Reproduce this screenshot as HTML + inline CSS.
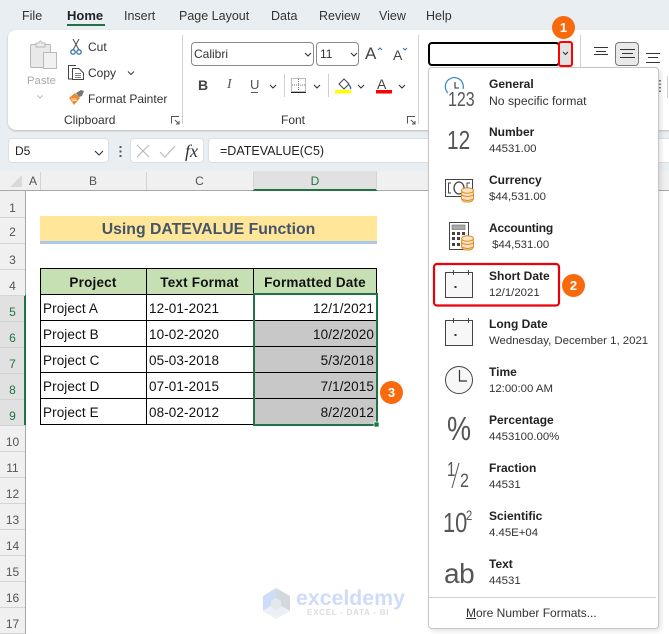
<!DOCTYPE html>
<html><head><meta charset="utf-8">
<style>
html,body{margin:0;padding:0}
body{width:669px;height:634px;overflow:hidden;position:relative;background:#fff;font-family:"Liberation Sans",sans-serif;color:#222}
.b{position:absolute;box-sizing:border-box}
.t{position:absolute;white-space:nowrap;line-height:16px;height:16px}
.tab{font-size:12.5px;top:8px;color:#333}
.rb{font-size:12px;color:#333}
.rn{font-size:12px;left:0;width:25px;text-align:center;color:#555}
.cell{font-size:13.5px;color:#111;letter-spacing:.1px}
.r{text-align:right;left:253px;width:121px}
.h{font-size:13.5px;font-weight:bold;color:#111;text-align:center;letter-spacing:.2px}
.m{font-size:12px;font-weight:bold;left:489px;color:#222}
.s{font-size:11.4px;left:489px;color:#333}
.ic{position:absolute;white-space:nowrap;color:#555;line-height:1;transform-origin:left top}
.badge{position:absolute;width:23px;height:23px;border-radius:50%;background:#f96a0c;color:#fff;font-weight:bold;font-size:13px;line-height:23px;text-align:center}
svg{position:absolute;left:0;top:0}
</style></head><body>
<div class="b" style="left:0;top:0;width:669px;height:171px;background:#e9eef2"></div>
<div class="b" style="left:8px;top:30px;width:670px;height:100px;background:#fff;border-radius:8px;box-shadow:0 1px 2px #bbb"></div>

<span class="t tab" style="left:22px">File</span>
<span class="t tab" style="left:67px;font-weight:bold;color:#222;font-size:13px">Home</span>
<div class="b" style="left:67px;top:24px;width:38px;height:2px;background:#217346"></div>
<span class="t tab" style="left:124px">Insert</span>
<span class="t tab" style="left:179px">Page Layout</span>
<span class="t tab" style="left:271px">Data</span>
<span class="t tab" style="left:319px">Review</span>
<span class="t tab" style="left:379px">View</span>
<span class="t tab" style="left:426px">Help</span>

<span class="t rb" style="left:27px;top:73px;color:#aaa;font-size:11.3px">Paste</span>
<span class="t rb" style="left:88px;top:39px">Cut</span>
<span class="t rb" style="left:88px;top:65px">Copy</span>
<span class="t rb" style="left:88px;top:91px">Format Painter</span>
<span class="t rb" style="left:64px;top:112px">Clipboard</span>
<span class="t rb" style="left:281px;top:112px">Font</span>

<div class="b" style="left:191px;top:42px;width:123px;height:24px;border:1px solid #8a8a8a;border-radius:4px"></div>
<div class="b" style="left:316px;top:42px;width:43px;height:24px;border:1px solid #8a8a8a;border-radius:4px"></div>
<span class="t rb" style="left:194px;top:46px">Calibri</span>
<span class="t rb" style="left:320px;top:46px">11</span>
<span class="t" style="left:365px;top:46px;font-size:17px;color:#444">A</span>
<span class="t" style="left:393px;top:47px;font-size:14px;color:#444">A</span>
<span class="t" style="left:198px;top:77px;font-size:14px;font-weight:bold;color:#444">B</span>
<span class="t" style="left:227px;top:77px;font-size:14px;font-style:italic;font-family:'Liberation Serif',serif;color:#555">I</span>
<span class="t" style="left:250px;top:77px;font-size:13px;color:#555">U</span>
<span class="t" style="left:377px;top:76px;font-size:14px;color:#444">A</span>

<div class="b" style="left:428px;top:42px;width:132px;height:24px;border:2px solid #000;border-radius:4px;background:#fff"></div>
<div class="b" style="left:558px;top:41px;width:15px;height:26px;border:2px solid #f00;border-radius:3px;background:#e2e2e2"></div>
<div class="b" style="left:615px;top:42px;width:24px;height:24px;border:1px solid #777;border-radius:4px;background:#e9e9e9"></div>

<div class="b" style="left:8px;top:138px;width:101px;height:25px;background:#fff;border:1px solid #dcdfe2;border-radius:4px"></div>
<span class="t" style="left:15px;top:143px;font-size:12px">D5</span>
<div class="b" style="left:130px;top:138px;width:74px;height:25px;background:#fff;border:1px solid #dcdfe2;border-radius:4px"></div>
<span class="t" style="left:185px;top:143px;font-size:18px;font-style:italic;font-family:'Liberation Serif',serif;color:#333">fx</span>
<div class="b" style="left:208px;top:138px;width:470px;height:25px;background:#fff;border:1px solid #dcdfe2;border-radius:4px"></div>
<span class="t" style="left:220px;top:143px;font-size:12.5px">=DATEVALUE(C5)</span>

<div class="b" style="left:0;top:171px;width:669px;height:20px;background:#f0f0f0;border-bottom:1px solid #a8a8a8"></div>
<div class="b" style="left:253px;top:171px;width:124px;height:20px;background:#e1e1e1;border-bottom:2px solid #217346"></div>
<div class="b" style="left:0;top:191px;width:26px;height:443px;background:#f0f0f0;border-right:1px solid #a8a8a8"></div>
<div class="b" style="left:0;top:295px;width:26px;height:130px;background:#e1e1e1;border-right:2px solid #217346"></div>

<span class="t" style="left:26px;width:14px;text-align:center;top:173px;font-size:12px;color:#555">A</span>
<span class="t" style="left:40px;width:106px;text-align:center;top:173px;font-size:12px;color:#555">B</span>
<span class="t" style="left:146px;width:107px;text-align:center;top:173px;font-size:12px;color:#555">C</span>
<span class="t" style="left:253px;width:124px;text-align:center;top:173px;font-size:12px;color:#217346">D</span>

<span class="t rn" style="top:200px">1</span>
<span class="t rn" style="top:224px">2</span>
<span class="t rn" style="top:252px">3</span>
<span class="t rn" style="top:278px">4</span>
<span class="t rn" style="top:304px;color:#217346">5</span>
<span class="t rn" style="top:330px;color:#217346">6</span>
<span class="t rn" style="top:356px;color:#217346">7</span>
<span class="t rn" style="top:382px;color:#217346">8</span>
<span class="t rn" style="top:408px;color:#217346">9</span>
<span class="t rn" style="top:434px">10</span>
<span class="t rn" style="top:460px">11</span>
<span class="t rn" style="top:486px">12</span>
<span class="t rn" style="top:512px">13</span>
<span class="t rn" style="top:538px">14</span>
<span class="t rn" style="top:564px">15</span>
<span class="t rn" style="top:590px">16</span>
<span class="t rn" style="top:616px">17</span>

<div class="b" style="left:40px;top:216px;width:337px;height:28px;background:#ffe699;border-bottom:3px solid #a9c8ec"></div>
<span class="t" style="left:40px;width:337px;text-align:center;top:222px;font-size:15.8px;font-weight:bold;color:#44546a">Using DATEVALUE Function</span>

<div class="b" style="left:40px;top:268px;width:337px;height:27px;background:#c6e0b4"></div>
<div class="b" style="left:254px;top:321px;width:122px;height:104px;background:#c8c8c8"></div>

<span class="t h" style="left:40px;width:106px;top:275px">Project</span>
<span class="t h" style="left:146px;width:107px;top:275px">Text Format</span>
<span class="t h" style="left:253px;width:124px;top:275px">Formatted Date</span>
<span class="t cell" style="left:43px;top:301px">Project A</span>
<span class="t cell" style="left:43px;top:327px">Project B</span>
<span class="t cell" style="left:43px;top:353px">Project C</span>
<span class="t cell" style="left:43px;top:379px">Project D</span>
<span class="t cell" style="left:43px;top:405px">Project E</span>
<span class="t cell" style="left:149px;top:301px">12-01-2021</span>
<span class="t cell" style="left:149px;top:327px">10-02-2020</span>
<span class="t cell" style="left:149px;top:353px">05-03-2018</span>
<span class="t cell" style="left:149px;top:379px">07-01-2015</span>
<span class="t cell" style="left:149px;top:405px">08-02-2012</span>
<span class="t cell r" style="top:301px">12/1/2021</span>
<span class="t cell r" style="top:327px">10/2/2020</span>
<span class="t cell r" style="top:353px">5/3/2018</span>
<span class="t cell r" style="top:379px">7/1/2015</span>
<span class="t cell r" style="top:405px">8/2/2012</span>

<svg width="669" height="634" viewBox="0 0 669 634" fill="none">
<!-- row header ticks -->
<g stroke="#d4d4d4"><path d="M0 217.500H25M0 243.500H25M0 269.500H25M0 295.500H25M0 321.500H24M0 347.500H24M0 373.500H24M0 399.500H24M0 425.500H25M0 451.500H25M0 477.500H25M0 503.500H25M0 529.500H25M0 555.500H25M0 581.500H25M0 607.500H25M0 633.500H25"/>
<path d="M40.500 172V190M146.500 172V190M253.500 172V190M376.500 172V190"/></g>
<path d="M10 187H22V175Z" fill="#d9d9d9"/>
<!-- table grid -->
<g stroke="#000"><path d="M40 268.500H377M40 294.500H254M40 320.500H377M40 346.500H377M40 372.500H377M40 398.500H377M40 424.500H254"/>
<path d="M40.500 268V425M146.500 268V425M253.500 268V295M376.500 268V295"/></g>
<rect x="254" y="294" width="123" height="131" stroke="#217346" stroke-width="2"/>
<rect x="374" y="422" width="5" height="5" fill="#217346" stroke="#fff" stroke-width=".7"/>
<!-- separators -->
<g stroke="#d0d0d0"><path d="M182.500 35V124M418.500 35V124M580.500 35V124M284.500 74V97M328.500 74V97"/></g>
<!-- paste -->
<rect x="30.500" y="44.500" width="20" height="23" fill="#e9e9e9" stroke="#b8b8b8" rx="1"/>
<path d="M36 47V43H39Q40.500 39 42 43H45V47Z" fill="#ececec" stroke="#b8b8b8"/>
<rect x="43.500" y="52.500" width="13" height="16" fill="#f1f1f1" stroke="#b8b8b8"/>
<path d="M37.500 95.500l2.500 2.500 2.500-2.500" stroke="#bbb"/>
<!-- cut -->
<path d="M73 39L79 50M79 39L73 50" stroke="#555" stroke-width="1.100"/>
<circle cx="73" cy="52" r="2.200" stroke="#2e75b6" stroke-width="1.300"/><circle cx="79" cy="52" r="2.200" stroke="#2e75b6" stroke-width="1.300"/>
<!-- copy -->
<path d="M72 79H68.500V65.500H76" stroke="#444"/>
<path d="M72.500 68.500H79L83.500 73V79.500H72.500Z" fill="#fff" stroke="#444"/>
<path d="M75 73.500H81M75 75.500H81M75 77.500H81" stroke="#555" stroke-width=".7"/>
<path d="M128 71.500l3 3 3-3" stroke="#444" stroke-width="1.100"/>
<!-- format painter -->
<path d="M69 98L75 93L80 98L74 105Z" fill="#ed8b2f"/>
<path d="M76 93L81 90L84 91L82 96L79 97Z" fill="#777"/>
<path d="M71 99L76 99M72 101L77 100" stroke="#fff" stroke-width=".8"/>
<!-- launchers -->
<g stroke="#555"><path d="M171.500 123.500V116.500H179M175 120l4 4M179 121V124H176"/>
<path d="M407.500 123.500V116.500H415M411 120l4 4M415 121V124H412"/></g>
<!-- combo chevrons -->
<g stroke="#333" stroke-width="1.100">
<path d="M305 53l3 3 3-3M351 53l3 3 3-3M563 52l2.500 2.500 2.500-2.500" />
<path d="M270 85l3 3 3-3M314 85l3 3 3-3M358 85l3 3 3-3M399 85l3 3 3-3"/>
<path d="M95 151l4 4 4-4"/></g>
<path d="M378 50l2 -2 2 2" stroke="#2e75b6"/><path d="M403 48l2 2 2-2" stroke="#2e75b6"/>
<!-- underline / borders -->
<path d="M251 92.500H258" stroke="#555"/>
<rect x="291.500" y="78.500" width="14" height="13" stroke="#777" stroke-dasharray="1 1"/>
<path d="M298.500 79V91M292 85H305" stroke="#777" stroke-dasharray="1 1"/>
<path d="M291 92.500H306" stroke="#222"/>
<!-- fill -->
<path d="M339 84L344 79L349 84L344 89Z" fill="#fff" stroke="#444"/>
<path d="M349 85q2 2 1.500 4" stroke="#2e75b6" stroke-width="1.500"/>
<rect x="335" y="90" width="16" height="3.500" fill="#ff0"/>
<rect x="376" y="90" width="16" height="3.500" fill="#f00"/>
<!-- align -->
<g stroke="#333"><path d="M594 47.500H608M596 51.500H606M594 54.500H608"/>
<path d="M620 49.500H635M622 53.500H633M620 57.500H635"/>
<path d="M646 53.500H660M648 57.500H658M646 62.500H660"/></g>
<g stroke="#555"><path d="M120.500 146V148M120.500 150.500V152.500M120.500 155V157" stroke-width="2"/></g>
<!-- right strip dots -->
<path d="M660 80V92" stroke="#555" stroke-dasharray="1.500 2" stroke-width="1.500"/>
<path d="M667.500 76V98" stroke="#d0d0d0"/>
<!-- fx box -->
<path d="M137 145L149 157M149 145L137 157" stroke="#bbb" stroke-width="1.200"/>
<path d="M160 152L165 157L175 146" stroke="#bbb" stroke-width="1.200"/>
<!-- watermark -->
<path d="M263 596L276 588V603L263 611Z" fill="#cfdcf9"/>
<path d="M276 588L290 596V611L276 603Z" fill="#d3d8de"/>
<path d="M263 611L276 603L290 611L276 619Z" fill="#eaf0f6"/>
<path d="M271 601L276 598L281 601V607L276 610L271 607Z" fill="#e4e8ea"/>
</svg>

<span class="t" style="left:296px;top:588px;font-size:21.300px;line-height:20px;height:20px;font-weight:bold;color:#cfdcf9">exceldemy</span>
<span class="t" style="left:307px;top:608px;font-size:8px;line-height:10px;height:10px;font-weight:bold;color:#dcdcdc;letter-spacing:.75px">EXCEL - DATA - BI</span>

<!-- dropdown -->
<div class="b" style="left:428px;top:67px;width:231px;height:562px;background:#fff;border:1px solid #c6c6c6;border-radius:4px;box-shadow:2px 2px 5px rgba(0,0,0,.12)"></div>

<span class="t m" style="top:76px">General</span><span class="t s" style="top:93px;font-size:12.200px">No specific format</span>
<span class="t m" style="top:124px">Number</span><span class="t s" style="top:141px">44531.00</span>
<span class="t m" style="top:172px">Currency</span><span class="t s" style="top:189px">$44,531.00</span>
<span class="t m" style="top:220px;letter-spacing:-.2px">Accounting</span><span class="t s" style="top:237px">&nbsp;$44,531.00</span>
<span class="t m" style="top:268px">Short Date</span><span class="t s" style="top:285px">12/1/2021</span>
<span class="t m" style="top:316px">Long Date</span><span class="t s" style="top:333px">Wednesday, December 1, 2021</span>
<span class="t m" style="top:364px">Time</span><span class="t s" style="top:381px">12:00:00 AM</span>
<span class="t m" style="top:412px">Percentage</span><span class="t s" style="top:429px">4453100.00%</span>
<span class="t m" style="top:460px">Fraction</span><span class="t s" style="top:477px">44531</span>
<span class="t m" style="top:508px">Scientific</span><span class="t s" style="top:525px">4.45E+04</span>
<span class="t m" style="top:556px">Text</span><span class="t s" style="top:573px">44531</span>
<span class="t" style="left:466px;top:605px;font-size:12px;color:#333"><u>M</u>ore Number Formats...</span>

<span class="ic" style="left:448px;top:90px;font-size:20px;transform:scaleX(.8)">123</span>
<span class="ic" style="left:447px;top:127px;font-size:26px;transform:scaleX(.8)">12</span>
<span class="ic" style="left:447px;top:412px;font-size:33px;transform:scaleX(.82)">%</span>
<span class="ic" style="left:447px;top:460px;font-size:20px;transform:scaleX(.75)">1</span>
<span class="ic" style="left:460px;top:472px;font-size:19px;transform:scaleX(.85)">2</span>
<span class="ic" style="left:443px;top:509px;font-size:28px;transform:scaleX(.78)">10</span>
<span class="ic" style="left:466px;top:508px;font-size:14px;transform:scaleX(.8)">2</span>
<span class="ic" style="left:444px;top:560px;font-size:28px;letter-spacing:-.5px">ab</span>

<svg width="669" height="634" viewBox="0 0 669 634" fill="none">
<!-- general clock -->
<path d="M448 93A9 9 0 1 1 463 89" stroke="#2e86c9" stroke-width="1.200"/>
<path d="M455 82V88H459" stroke="#333" stroke-width="1.100"/>
<!-- currency -->
<rect x="445.500" y="179.500" width="27" height="17" fill="#fff" stroke="#444"/>
<path d="M451 183H448.500V193H451M470 183H467V193" stroke="#444"/>
<ellipse cx="459" cy="188" rx="5" ry="6" stroke="#444" stroke-width="1.300"/>
<g fill="#fbe3c4" stroke="#e08a23"><rect x="461.500" y="190" width="12" height="12" rx="4"/><ellipse cx="467.500" cy="190.500" rx="6" ry="2.800"/><path d="M461.500 195q6 3 12 0M461.500 199q6 3 12 0" fill="none"/></g>
<!-- accounting -->
<rect x="449.500" y="222.500" width="19" height="27" fill="#fff" stroke="#444"/>
<rect x="452" y="225" width="13" height="4.500" fill="#aaa" stroke="#666" stroke-width=".6"/>
<g fill="#444"><rect x="452" y="232" width="3" height="3"/><rect x="457" y="232" width="3" height="3"/><rect x="462" y="232" width="3" height="3"/><rect x="452" y="237" width="3" height="3"/><rect x="457" y="237" width="3" height="3"/><rect x="452" y="243" width="3" height="3"/><rect x="457" y="243" width="3" height="3"/></g>
<g fill="#fbe3c4" stroke="#e08a23"><rect x="461.500" y="238" width="12" height="12" rx="4"/><ellipse cx="467.500" cy="238.500" rx="6" ry="2.800"/><path d="M461.500 243q6 3 12 0M461.500 247q6 3 12 0" fill="none"/></g>
<!-- calendars -->
<g stroke="#444"><rect x="445.500" y="272.500" width="27" height="25" fill="#f7f7f7"/><path d="M453.500 270V275M468.500 270V275"/>
<rect x="445.500" y="320.500" width="27" height="25" fill="#f7f7f7"/><path d="M453.500 318V323M468.500 318V323"/></g>
<rect x="454.500" y="286" width="2" height="2" fill="#333"/><rect x="454.500" y="334" width="2" height="2" fill="#333"/>
<!-- clock -->
<circle cx="459" cy="380" r="13.500" fill="#f7f7f7" stroke="#444"/>
<path d="M459.500 370V381H467" stroke="#333" stroke-width="1.200"/>
<!-- fraction slash -->
<path d="M459 463L452 488" stroke="#555"/>
<!-- short date box -->
<rect x="434" y="264" width="125" height="41.500" rx="3" stroke="#e8000b" stroke-width="2.200"/>
<path d="M429 597.500H656" stroke="#d0d0d0"/>
</svg>

<div class="badge" style="left:552px;top:16px">1</div>
<div class="badge" style="left:562px;top:274px">2</div>
<div class="badge" style="left:380px;top:381px">3</div>
</body></html>
